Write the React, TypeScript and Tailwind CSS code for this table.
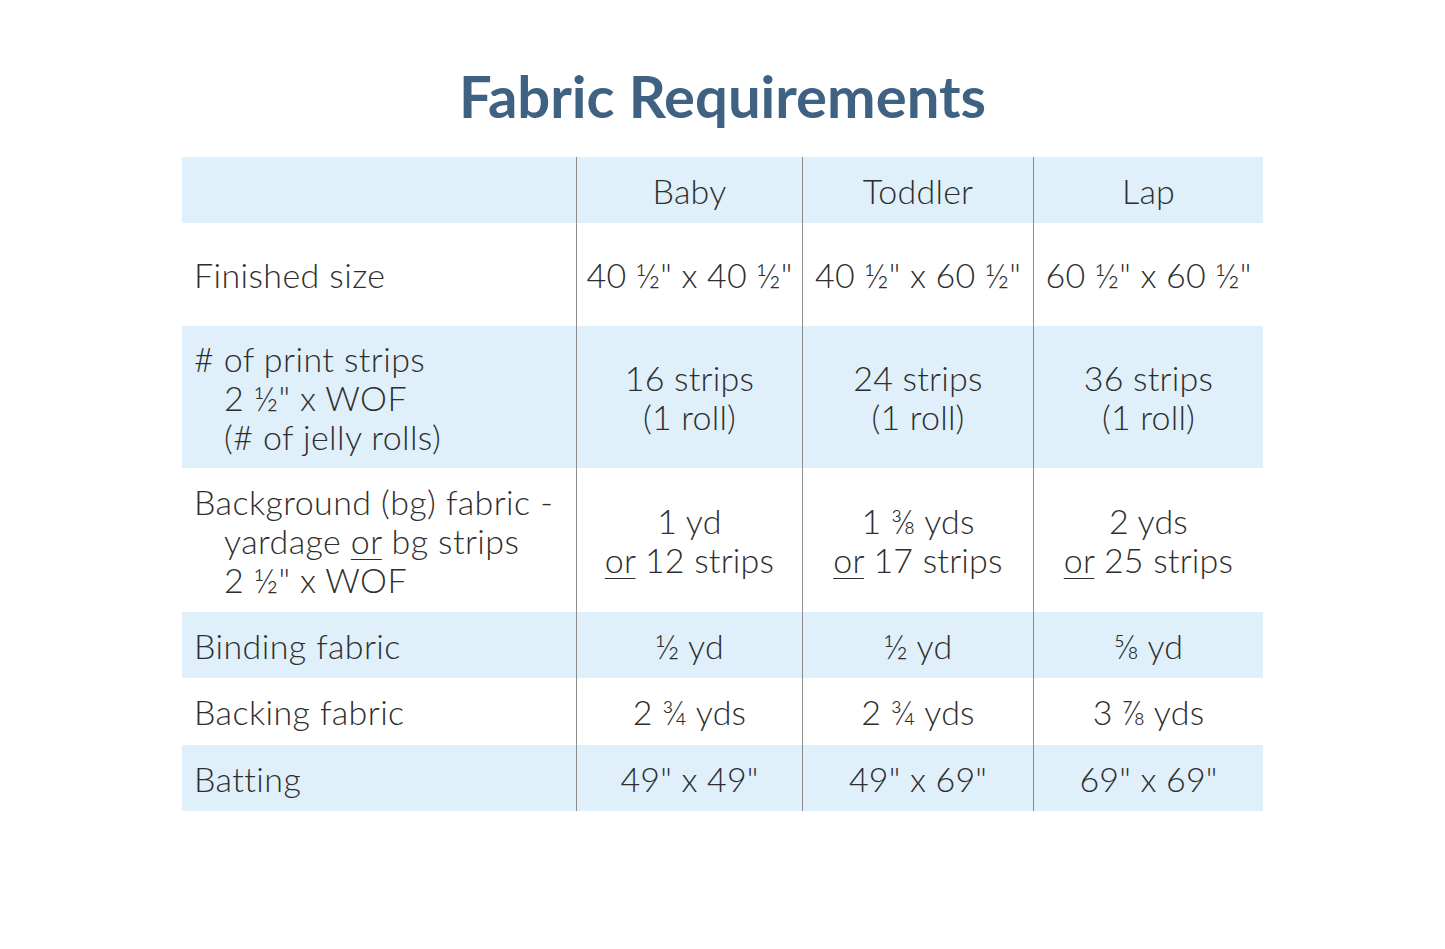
const rows = [
  { bg: true, h: "h-[66px]", label: [""], cells: [["Baby"], ["Toddler"], ["Lap"]] },
  { bg: false, h: "h-[103px]", label: ["Finished size"], cells: [["40 ½\" x 40 ½\""], ["40 ½\" x 60 ½\""], ["60 ½\" x 60 ½\""]] },
  {
    bg: true,
    h: "h-[142px]",
    label: ["# of print strips", "2 ½\" x WOF", "(# of jelly rolls)"],
    cells: [["16 strips", "(1 roll)"], ["24 strips", "(1 roll)"], ["36 strips", "(1 roll)"]],
  },
  {
    bg: false,
    h: "h-[144px]",
    label: ["Background (bg) fabric -", "yardage|or|bg strips", "2 ½\" x WOF"],
    cells: [["1 yd", "|or|12 strips"], ["1 ⅜ yds", "|or|17 strips"], ["2 yds", "|or|25 strips"]],
  },
  { bg: true, h: "h-[66px]", label: ["Binding fabric"], cells: [["½ yd"], ["½ yd"], ["⅝ yd"]] },
  { bg: false, h: "h-[67px]", label: ["Backing fabric"], cells: [["2 ¾ yds"], ["2 ¾ yds"], ["3 ⅞ yds"]] },
  { bg: true, h: "h-[66px]", label: ["Batting"], cells: [["49\" x 49\""], ["49\" x 69\""], ["69\" x 69\""]] },
];

// "|or|" marks the underlined word
function Line({ text }: { text: string }) {
  if (!text.includes("|or|")) return <>{text}</>;
  const [a, b] = text.split("|or|");
  return (
    <>
      {a}
      {a ? " " : ""}
      <span className="underline decoration-1 underline-offset-[5px]">or</span> {b}
    </>
  );
}

export default function App() {
  return (
    <div className="w-[1445px] h-[949px] bg-white font-['Lato','Liberation_Sans',sans-serif] text-[#2e2e2e]">
      <h1 className="pt-[60px] text-center text-[58px] leading-[72px] font-bold text-[#3f6283]">
        Fabric Requirements
      </h1>
      <div className="mt-[25px] ml-[182px] w-[1081px] flex flex-col">
        {rows.map((row, i) => (
          <div
            key={i}
            className={`grid grid-cols-[394px_226px_231px_230px] ${row.h} ${row.bg ? "bg-[#dff0fa]" : "bg-white"}`}
          >
            <div className="flex flex-col justify-center pl-[12px] text-[34px] leading-[39px] font-light tracking-[0.4px] whitespace-nowrap">
              {row.label.map((l, j) => (
                <div key={j} className={j > 0 ? "pl-[30px]" : ""}>
                  <Line text={l} />
                </div>
              ))}
            </div>
            {row.cells.map((c, k) => (
              <div
                key={k}
                className="flex flex-col justify-center items-center border-l border-[#8c8c8c] text-[34px] leading-[39px] font-light tracking-[0.2px] whitespace-nowrap"
              >
                {c.map((l, j) => (
                  <div key={j}>
                    <Line text={l} />
                  </div>
                ))}
              </div>
            ))}
          </div>
        ))}
      </div>
    </div>
  );
}
